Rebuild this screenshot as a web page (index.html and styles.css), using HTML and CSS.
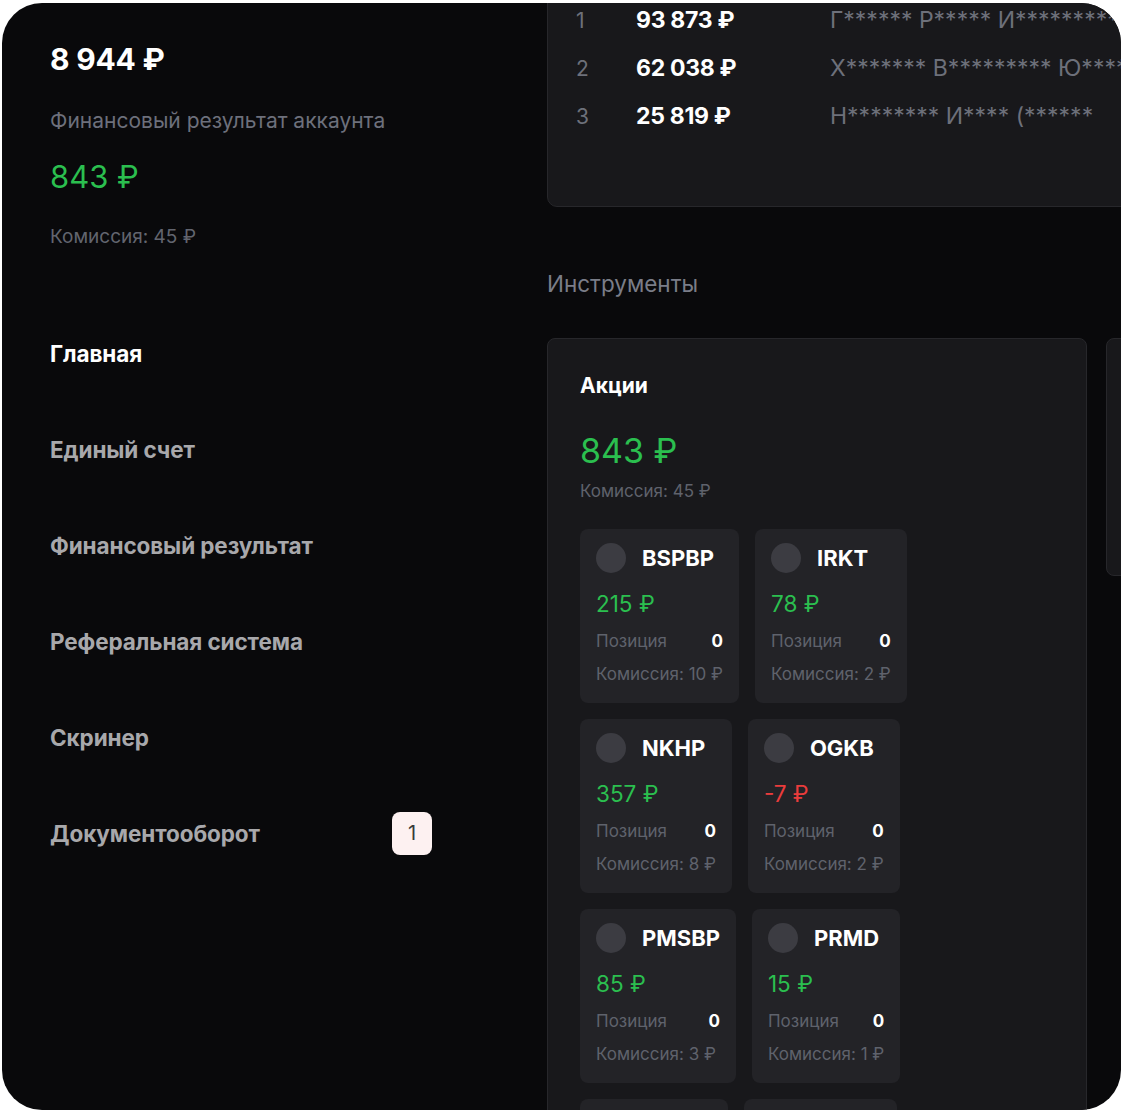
FILE: index.html
```html
<!DOCTYPE html>
<html lang="ru">
<head>
<meta charset="utf-8">
<link rel="stylesheet" href="styles.css">
</head>
<body>
<div class="frame">
  <aside class="sidebar">
    <div class="balance">8 944 ₽</div>
    <div class="label">Финансовый результат аккаунта</div>
    <div class="pnl pos">843 ₽</div>
    <div class="fee">Комиссия: 45 ₽</div>
    <nav class="nav">
      <a class="nav-item active">Главная</a>
      <a class="nav-item">Единый счет</a>
      <a class="nav-item">Финансовый результат</a>
      <a class="nav-item">Реферальная система</a>
      <a class="nav-item">Скринер</a>
      <a class="nav-item">Документооборот <span class="badge">1</span></a>
    </nav>
  </aside>
  <main class="main">
    <section class="top-card">
      <div class="rank-row"><span class="rank">1</span><span class="amount">93 873 ₽</span><span class="name">Г****** Р***** И*********</span></div>
      <div class="rank-row"><span class="rank">2</span><span class="amount">62 038 ₽</span><span class="name">Х******* В********* Ю******</span></div>
      <div class="rank-row"><span class="rank">3</span><span class="amount">25 819 ₽</span><span class="name">Н******** И**** (******</span></div>
    </section>
    <h2 class="section-title">Инструменты</h2>
    <div class="groups">
      <section class="group">
        <h3 class="group-title">Акции</h3>
        <div class="group-pnl pos">843 ₽</div>
        <div class="group-fee">Комиссия: 45 ₽</div>
        <div class="insts">
          <div class="inst">
            <div class="inst-head"><span class="logo"></span><span class="ticker">BSPBP</span></div>
            <div class="inst-val pos">215 ₽</div>
            <div class="inst-row"><span>Позиция</span><b>0</b></div>
            <div class="inst-fee">Комиссия: 10 ₽</div>
          </div>
          <div class="inst">
            <div class="inst-head"><span class="logo"></span><span class="ticker">IRKT</span></div>
            <div class="inst-val pos">78 ₽</div>
            <div class="inst-row"><span>Позиция</span><b>0</b></div>
            <div class="inst-fee">Комиссия: 2 ₽</div>
          </div>
          <div class="inst">
            <div class="inst-head"><span class="logo"></span><span class="ticker">NKHP</span></div>
            <div class="inst-val pos">357 ₽</div>
            <div class="inst-row"><span>Позиция</span><b>0</b></div>
            <div class="inst-fee">Комиссия: 8 ₽</div>
          </div>
          <div class="inst">
            <div class="inst-head"><span class="logo"></span><span class="ticker">OGKB</span></div>
            <div class="inst-val neg">-7 ₽</div>
            <div class="inst-row"><span>Позиция</span><b>0</b></div>
            <div class="inst-fee">Комиссия: 2 ₽</div>
          </div>
          <div class="inst">
            <div class="inst-head"><span class="logo"></span><span class="ticker">PMSBP</span></div>
            <div class="inst-val pos">85 ₽</div>
            <div class="inst-row"><span>Позиция</span><b>0</b></div>
            <div class="inst-fee">Комиссия: 3 ₽</div>
          </div>
          <div class="inst">
            <div class="inst-head"><span class="logo"></span><span class="ticker">PRMD</span></div>
            <div class="inst-val pos">15 ₽</div>
            <div class="inst-row"><span>Позиция</span><b>0</b></div>
            <div class="inst-fee">Комиссия: 1 ₽</div>
          </div>
          <div class="inst">
            <div class="inst-head"><span class="logo"></span><span class="ticker">RTKM</span></div>
            <div class="inst-val pos">12 ₽</div>
            <div class="inst-row"><span>Позиция</span><b>0</b></div>
            <div class="inst-fee">Комиссия: 1 ₽</div>
          </div>
          <div class="inst">
            <div class="inst-head"><span class="logo"></span><span class="ticker">SBERP</span></div>
            <div class="inst-val pos">40 ₽</div>
            <div class="inst-row"><span>Позиция</span><b>0</b></div>
            <div class="inst-fee">Комиссия: 4 ₽</div>
          </div>
        </div>
      </section>
      <section class="group group-side"></section>
    </div>
  </main>
</div>
</body>
</html>
```

FILE: styles.css
```css
* { box-sizing: border-box; }
html, body { margin: 0; padding: 0; }
body {
  background: #ffffff;
  font-family: Inter, "Noto Sans", sans-serif;
  color: #ffffff;
}
.frame {
  margin: 3px 0 0 2px;
  width: 1119px;
  height: 1107px;
  border-radius: 40px;
  background: #09090b;
  overflow: hidden;
  display: flex;
}
.sidebar {
  flex: 0 0 545px;
  padding: 38px 0 0 48px;
}
.balance { font-size: 30px; line-height: 36px; font-weight: 700; letter-spacing: -0.2px; }
.label { margin-top: 30px; font-size: 21px; line-height: 28px; color: #6d707c; }
.pnl { margin-top: 22px; font-size: 31px; line-height: 40px; }
.fee { margin-top: 28px; font-size: 19px; line-height: 24px; color: #62656f; }
.pos { color: #2bbf4f; }
.neg { color: #ea3c3c; }
.nav { margin-top: 90px; width: 382px; display: flex; flex-direction: column; gap: 68px; }
.nav-item {
  display: flex; align-items: center; justify-content: space-between;
  height: 28px; font-size: 22.5px; font-weight: 700; color: #a8a8ab; letter-spacing: -0.1px;
}
.nav-item.active { color: #ffffff; }
.badge {
  width: 40px; height: 43px; border-radius: 8px;
  background: #fdf1f1; color: #3a3a3a;
  font-size: 20px; font-weight: 400;
  display: flex; align-items: center; justify-content: center;
}
.main { flex: 0 0 620px; }
.top-card {
  margin-top: -32px;
  width: 620px;
  padding: 24px 0 66px 28px;
  background: #18181b;
  border: 1px solid #27272b;
  border-radius: 10px;
}
.rank-row {
  display: grid; grid-template-columns: 60px 194px auto;
  height: 48px; align-items: center; font-size: 23px; white-space: nowrap;
}
.rank { color: #6d707a; font-size: 21px; }
.amount { font-weight: 700; letter-spacing: -0.3px; }
.name { color: #6d707a; }
.section-title { margin: 63px 0 0; font-size: 22.5px; line-height: 28px; font-weight: 400; color: #7a7d88; }
.groups { margin-top: 40px; display: flex; gap: 19px; align-items: flex-start; }
.group {
  flex: 0 0 538px;
  padding: 33px 32px 0;
  background: #18181b;
  border: 1px solid #27272b;
  border-radius: 8px;
  height: 900px;
}
.group-side { flex: 0 0 300px; height: 238px; padding: 0; }
.group-title { margin: 0; font-size: 21px; line-height: 28px; font-weight: 700; }
.group-pnl { margin-top: 29px; font-size: 34px; line-height: 44px; }
.group-fee { margin-top: 7px; font-size: 17px; line-height: 22px; color: #5f626c; }
.insts { margin-top: 27px; display: flex; flex-wrap: wrap; gap: 16px; width: 474px; }
.inst {
  padding: 14px 16px 18px;
  background: #232327;
  border-radius: 8px;
}
.inst-head { display: flex; align-items: center; gap: 16px; height: 30px; }
.logo { width: 30px; height: 30px; border-radius: 50%; background: #3c3c42; }
.ticker { font-size: 22px; font-weight: 700; }
.inst-val { margin-top: 16px; font-size: 22.5px; line-height: 30px; }
.inst-row {
  margin-top: 11px; display: flex; justify-content: space-between;
  font-size: 17px; line-height: 22px; color: #5f626c;
}
.inst-row b { color: #ffffff; font-weight: 700; }
.inst-fee { margin-top: 11px; font-size: 17px; line-height: 22px; color: #5f626c; white-space: nowrap; }
```
